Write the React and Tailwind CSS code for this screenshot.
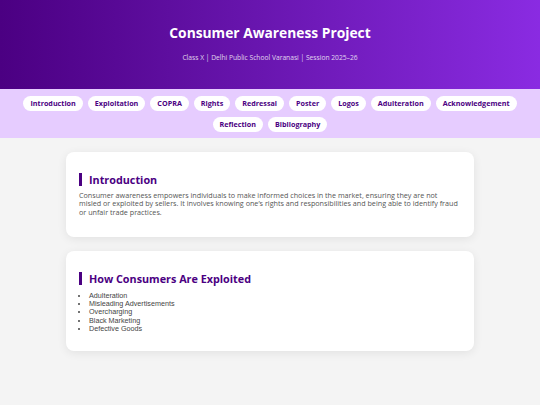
import React from 'react';

const navItems = [
  'Introduction',
  'Exploitation',
  'COPRA',
  'Rights',
  'Redressal',
  'Poster',
  'Logos',
  'Adulteration',
  'Acknowledgement',
  'Reflection',
  'Bibliography',
];

const exploits = [
  'Adulteration',
  'Misleading Advertisements',
  'Overcharging',
  'Black Marketing',
  'Defective Goods',
];

const SectionTitle = ({ children }) => (
  <h2 className="border-l-[3px] border-[#4b0082] pl-[7px] text-[10.8px] leading-[13px] font-bold text-[#4b0082] mb-[5px]">
    {children}
  </h2>
);

const App = () => {
  return (
    <div className="min-h-[405px] bg-[#f4f4f4] font-['Open_Sans',sans-serif]">
      {/* Header */}
      <header className="h-[89px] bg-gradient-to-r from-[#4b0082] to-[#8a2be2] flex flex-col items-center justify-center text-white">
        <h1 className="text-[13.8px] leading-[18px] font-bold mt-[-4px]">Consumer Awareness Project</h1>
        <p className="text-[6.7px] leading-[9px] opacity-80 mt-[11px]">
          Class X | Delhi Public School Varanasi | Session 2025–26
        </p>
      </header>

      {/* Nav */}
      <nav className="bg-[#e6ccff] px-[20px] pt-[7px] pb-[6px] flex flex-wrap justify-center gap-x-[5px] gap-y-[6px]">
        {navItems.map((item) => (
          <span
            key={item}
            className="bg-white rounded-full px-[7px] h-[15px] flex items-center text-[7.2px] font-bold text-[#4b0082]"
          >
            {item}
          </span>
        ))}
      </nav>

      {/* Content */}
      <main className="w-[408px] mx-auto pt-[14px] pb-[20px] flex flex-col gap-[14px]">
        <section className="bg-white rounded-[8px] shadow-[0_2px_10px_rgba(0,0,0,0.08)] px-[13px] pt-[21px] h-[85px]">
          <SectionTitle>Introduction</SectionTitle>
          <p className="text-[7.2px] leading-[8.3px] text-[#555]">
            Consumer awareness empowers individuals to make informed choices in the market, ensuring they are not
            misled or exploited by sellers. It involves knowing one’s rights and responsibilities and being able to identify fraud
            or unfair trade practices.
          </p>
        </section>

        <section className="bg-white rounded-[8px] shadow-[0_2px_10px_rgba(0,0,0,0.08)] px-[13px] pt-[21px] h-[100px]">
          <SectionTitle>How Consumers Are Exploited</SectionTitle>
          <ul className="list-disc pl-[10px] mt-[7px] text-[7.2px] leading-[8.2px] text-[#444] font-['Liberation_Sans',sans-serif]">
            {exploits.map((e) => (
              <li key={e}>{e}</li>
            ))}
          </ul>
        </section>
      </main>
    </div>
  );
};

export default App;
